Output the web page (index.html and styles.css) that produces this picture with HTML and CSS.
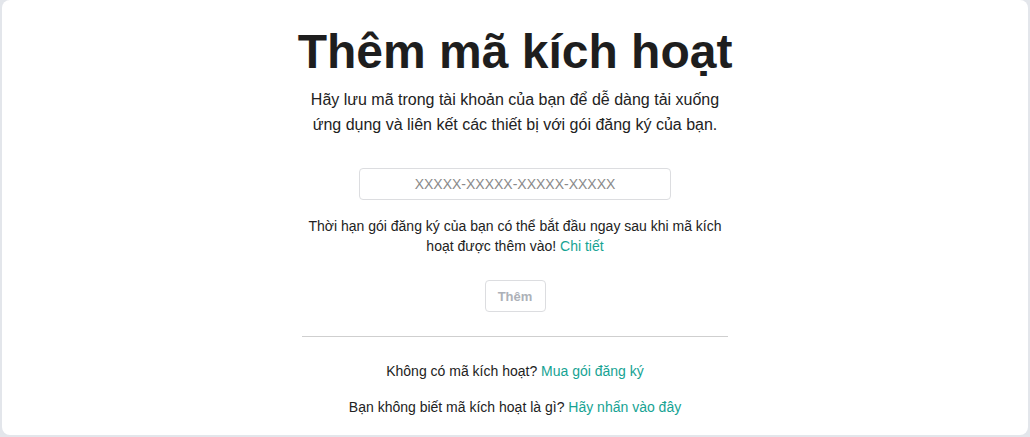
FILE: index.html
```html
<!DOCTYPE html>
<html lang="vi">

<head>
    <meta charset="UTF-8">
    <meta name="viewport" content="width=device-width, initial-scale=1.0">
    <title>Thêm mã kích hoạt</title>
    <link rel="stylesheet" href="styles.css">
</head>

<body>
    <main class="card">
        <div class="activate">
            <h1 class="title">Thêm mã kích hoạt</h1>
            <p class="lead">Hãy lưu mã trong tài khoản của bạn để dễ dàng tải xuống ứng dụng và liên kết các thiết bị với gói đăng ký của bạn.</p>

            <input class="code-input" type="text" placeholder="XXXXX-XXXXX-XXXXX-XXXXX">

            <p class="note">Thời hạn gói đăng ký của bạn có thể bắt đầu ngay sau khi mã kích hoạt được thêm vào! <a href="#">Chi tiết</a></p>

            <button class="btn" disabled>Thêm</button>

            <hr class="divider">

            <p class="help">Không có mã kích hoạt? <a href="#">Mua gói đăng ký</a></p>
            <p class="help">Bạn không biết mã kích hoạt là gì? <a href="#">Hãy nhấn vào đây</a></p>
        </div>
    </main>
</body>

</html>
```

FILE: styles.css
```css
* {
    margin: 0;
    padding: 0;
    box-sizing: border-box;
}

html,
body {
    height: 100%;
}

body {
    font-family: "Liberation Sans", Arial, sans-serif;
    color: #222;
    background: #e3e6eb;
    padding: 0 2px 2px;
}

.card {
    background: #fff;
    border-radius: 8px;
    height: 100%;
    display: flex;
    justify-content: center;
}

.activate {
    width: 426px;
    padding-top: 24px;
    display: flex;
    flex-direction: column;
    align-items: center;
    text-align: center;
}

.activate > * {
    flex-shrink: 0;
}

.title {
    font-size: 48px;
    line-height: 56px;
    font-weight: bold;
    color: #1e1e1e;
    white-space: nowrap;
}

.lead {
    margin-top: 7px;
    font-size: 16px;
    line-height: 25px;
    color: #222;
}

.code-input {
    margin-top: 31px;
    width: 312px;
    height: 32px;
    border: 1px solid #dcdde0;
    border-radius: 4px;
    font-family: inherit;
    font-size: 14px;
    text-align: center;
    color: #222;
    outline: none;
}

.code-input::placeholder {
    color: #8a8a8a;
}

.note {
    margin-top: 16px;
    font-size: 14px;
    line-height: 20px;
}

a {
    color: #16a393;
    text-decoration: none;
}

.btn {
    margin-top: 24px;
    width: 61px;
    height: 32px;
    background: #fff;
    border: 1px solid #dcdde0;
    border-radius: 4px;
    font-family: inherit;
    font-size: 13px;
    font-weight: bold;
    color: #adb1b8;
}

.divider {
    margin-top: 24px;
    width: 100%;
    border: none;
    border-top: 1px solid #cfcfcf;
}

.help {
    margin-top: 24px;
    font-size: 14px;
    line-height: 20px;
}

.help + .help {
    margin-top: 16px;
}
```
